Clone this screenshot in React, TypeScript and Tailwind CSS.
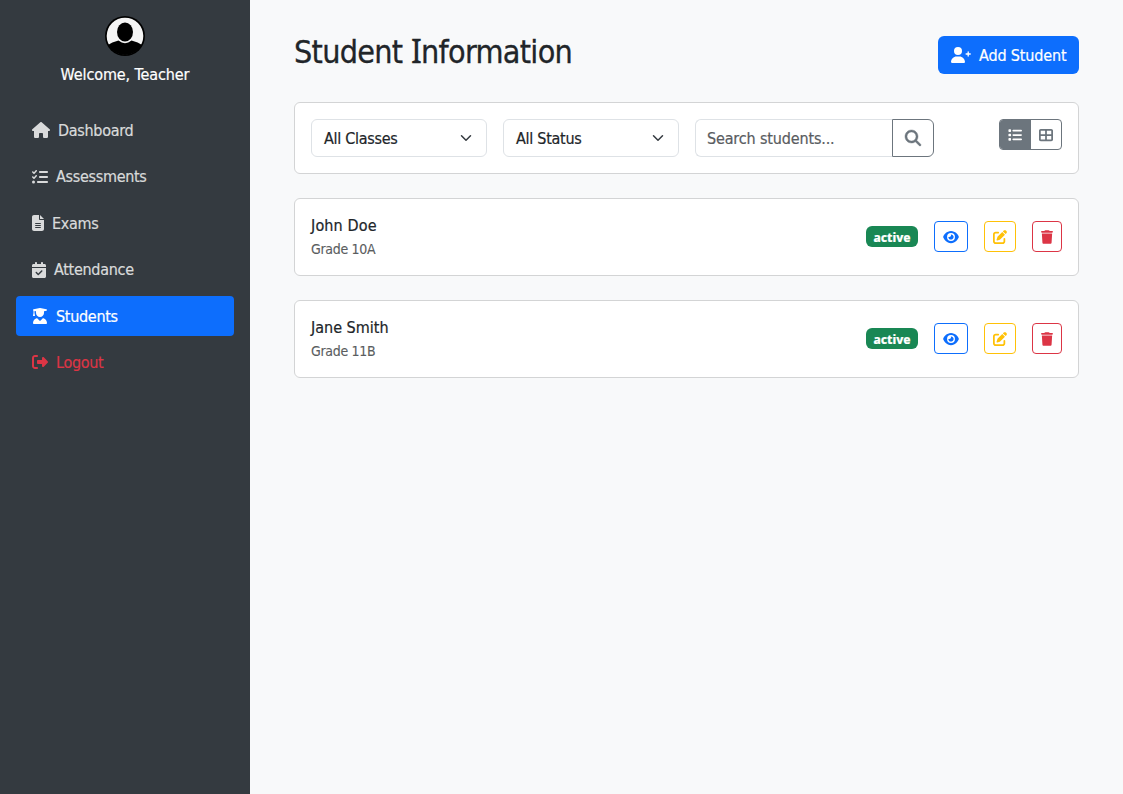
import type { ReactNode } from "react";
import {
  FaHouse,
  FaListCheck,
  FaFileLines,
  FaCalendarCheck,
  FaUserGraduate,
  FaRightFromBracket,
  FaMagnifyingGlass,
  FaList,
  FaTableCellsLarge,
  FaEye,
  FaPenToSquare,
  FaTrash,
} from "react-icons/fa6";

const students = [
  { name: "John Doe", grade: "Grade 10A", nameTracking: "tracking-[0.15px]" },
  { name: "Jane Smith", grade: "Grade 11B", nameTracking: "tracking-[0px]" },
];

function Avatar() {
  return (
    <svg className="size-10" viewBox="0 0 40 40">
      <defs>
        <clipPath id="face">
          <circle cx="20" cy="20" r="19" />
        </clipPath>
      </defs>
      <circle cx="20" cy="20" r="20" fill="#000" />
      <circle cx="20" cy="20" r="18.3" fill="#f4f4f4" />
      <g clipPath="url(#face)">
        <path d="M2 29.5Q7 26 13.5 24.6Q20 29.8 26.5 24.6Q33 26 38 29.5V40H2Z" fill="#000" />
        <ellipse cx="20" cy="16" rx="8" ry="9.5" fill="#000" />
      </g>
    </svg>
  );
}

function UserPlus() {
  return (
    <svg className="h-4 w-5 shrink-0" viewBox="0 0 640 512" fill="currentColor">
      <path d="M224 256A128 128 0 1 0 224 0a128 128 0 1 0 0 256zm-45.7 48C79.8 304 0 383.8 0 482.3C0 498.7 13.3 512 29.7 512H418.3c16.4 0 29.7-13.3 29.7-29.7C448 383.8 368.2 304 269.7 304H178.3z" />
      <path d="M550 158V290M484 224H616" stroke="currentColor" strokeWidth="42" strokeLinecap="round" />
    </svg>
  );
}

function NavItem({ icon, label, tone }: { icon: ReactNode; label: string; tone: string }) {
  return (
    <a className={`flex h-10 items-center gap-2 rounded px-4 ${tone}`}>
      {icon}
      <span className="pt-px">{label}</span>
    </a>
  );
}

function Select({ label }: { label: string }) {
  return (
    <div className="flex h-[38px] w-44 items-center justify-between rounded-md border border-[#dee2e6] px-3">
      <span className="pt-px tracking-[-0.28px]">{label}</span>
      <svg className="h-3 w-4" viewBox="0 0 16 16" fill="none" stroke="#343a40" strokeWidth="2" strokeLinecap="round" strokeLinejoin="round">
        <path d="m2 5 6 6 6-6" />
      </svg>
    </div>
  );
}

export default function App() {
  return (
    <div className="flex h-screen bg-[#f8f9fa] font-['DejaVu_Sans_Condensed','DejaVu_Sans',sans-serif] text-base tracking-[-0.3px] text-[#212529] [-webkit-text-stroke:0.2px_currentColor]">
      <aside className="w-[250px] shrink-0 bg-[#343a40] px-4 pt-4">
        <div className="flex flex-col items-center gap-1.5 text-white">
          <Avatar />
          <div className="pt-px leading-[23px] tracking-[-0.1px]">Welcome, Teacher</div>
        </div>
        <nav className="mt-[24.15px] flex flex-col gap-[6.47px]">
          <NavItem tone="text-[#d9dadb]" label="Dashboard" icon={<FaHouse className="h-4 w-[18px]" />} />
          <NavItem tone="text-[#d9dadb]" label="Assessments" icon={<FaListCheck className="size-4" />} />
          <NavItem tone="text-[#d9dadb]" label="Exams" icon={<FaFileLines className="h-4 w-3" />} />
          <NavItem tone="text-[#d9dadb]" label="Attendance" icon={<FaCalendarCheck className="h-4 w-3.5" />} />
          <NavItem tone="bg-[#0d6efd] text-white" label="Students" icon={<FaUserGraduate className="size-4" />} />
          <NavItem tone="text-[#dc3545]" label="Logout" icon={<FaRightFromBracket className="size-4" />} />
        </nav>
      </aside>
      <main className="flex-1 px-11 pt-8">
        <header className="flex items-start justify-between">
          <h2 className="text-[32px] leading-[38.4px] tracking-[-0.7px] [-webkit-text-stroke:0.3px_currentColor]">
            Student <span className="font-['Noto_Sans']">I</span>nformation
          </h2>
          <button className="mt-1 flex h-[38px] w-[141px] items-center gap-2 whitespace-nowrap rounded-md bg-[#0d6efd] px-[13px] text-white">
            <UserPlus />
            <span className="pt-px tracking-[-0.15px]">Add Student</span>
          </button>
        </header>
        <section className="mt-7 flex h-[72px] gap-4 rounded-md border border-[#d3d4d5] bg-white p-4">
          <Select label="All Classes" />
          <Select label="All Status" />
          <div className="flex">
            <div className="flex h-[38px] w-[197px] items-center rounded-l-md border border-r-0 border-[#dee2e6] px-[11px] pt-px text-[#595c5f]">
              <span className="tracking-[-0.15px]">Search students...</span>
            </div>
            <button className="flex h-[38px] w-[42px] items-center justify-center rounded-r-md border border-[#6c757d] text-[#6c757d]">
              <FaMagnifyingGlass className="size-4 overflow-visible" strokeWidth={14} />
            </button>
          </div>
          <div className="ml-auto flex h-[31px] w-[63px] overflow-hidden rounded border border-[#6c757d] text-[#6c757d]">
            <span className="flex w-[31px] items-center justify-center bg-[#6c757d] pr-px text-white">
              <FaList className="size-3.5" />
            </span>
            <span className="flex flex-1 items-center justify-center">
              <FaTableCellsLarge className="size-3.5" />
            </span>
          </div>
        </section>
        <div className="mt-6 flex flex-col gap-6">
          {students.map((s) => (
            <article key={s.name} className="flex h-[78px] items-center gap-4 rounded-md border border-[#d3d4d5] bg-white px-4 pb-px">
              <div className="mr-auto pt-[3px]">
                <div className={`leading-[19px] ${s.nameTracking}`}>{s.name}</div>
                <div className="mt-1 text-sm leading-[21px] text-[#5a5d60] [-webkit-text-stroke:0.1px_currentColor]">{s.grade}</div>
              </div>
              <span className="flex h-[21px] w-[52px] items-center justify-center rounded-md bg-[#198754] pt-0.5 font-['Noto_Sans'] text-xs font-extrabold tracking-normal text-white">
                active
              </span>
              <button className="flex h-[31px] w-[34px] items-center justify-center rounded border border-[#0d6efd] text-[#0d6efd]">
                <FaEye className="h-3.5 w-4" />
              </button>
              <button className="flex h-[31px] w-8 items-center justify-center rounded border border-[#ffc107] text-[#ffc107]">
                <FaPenToSquare className="size-3.5" />
              </button>
              <button className="flex h-[31px] w-[30px] items-center justify-center rounded border border-[#dc3545] text-[#dc3545]">
                <FaTrash className="h-3.5 w-3" />
              </button>
            </article>
          ))}
        </div>
      </main>
    </div>
  );
}
